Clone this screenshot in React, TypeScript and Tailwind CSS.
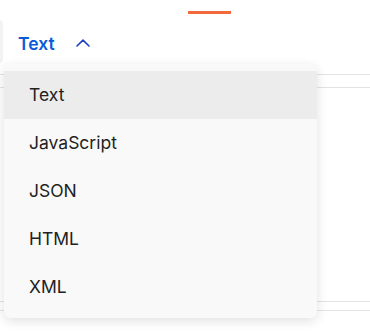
const items = ['Text', 'JavaScript', 'JSON', 'HTML', 'XML'];

export default function App() {
  const selected = 'Text';

  return (
    <div className="relative w-[370px] h-[331px] overflow-hidden bg-white font-['Inter',sans-serif]">
      {/* faint panel peeking at the left edge */}
      <div className="absolute left-[-8px] top-[20px] w-[11px] h-[43px] rounded-[4px] bg-[#f3f3f3]" />

      {/* active tab indicator */}
      <div className="pt-[11px]">
        <div className="ml-[188px] w-[43px] h-[3px] bg-[#f26a3b]" />
      </div>

      {/* language toggle */}
      <div className="h-[60px] pl-[18px] flex items-center gap-[21px]">
        <span className="text-[17.5px] font-semibold text-[#0a5ad8]">{selected}</span>
        <svg width="14" height="8" viewBox="0 0 14 8" fill="none" className="mt-[-2px]">
          <path d="M1 7L7 1.2L13 7" stroke="#1c3fc4" strokeWidth="1.6" strokeLinecap="round" strokeLinejoin="round" />
        </svg>
      </div>

      <div className="border-t border-[#e3e3e3]" />
      <div className="mt-[12px] border-t border-[#e3e3e3]" />

      <div className="mt-[213px] border-t border-[#e3e3e3]" />
      <div className="mt-[8px] border-t border-[#e3e3e3]" />

      {/* dropdown menu */}
      <div className="absolute left-[4px] top-[64px] w-[313px] rounded-[6px] bg-[#f9f9f9] py-[7px] shadow-[0_3px_12px_rgba(0,0,0,0.12)]">
        {items.map((item) => (
          <div
            key={item}
            className={`h-[48px] flex items-center pl-[25px] text-[17.5px] text-[#222222] ${
              item === selected ? 'bg-[#ececec]' : ''
            }`}
          >
            {item}
          </div>
        ))}
      </div>
    </div>
  );
}
